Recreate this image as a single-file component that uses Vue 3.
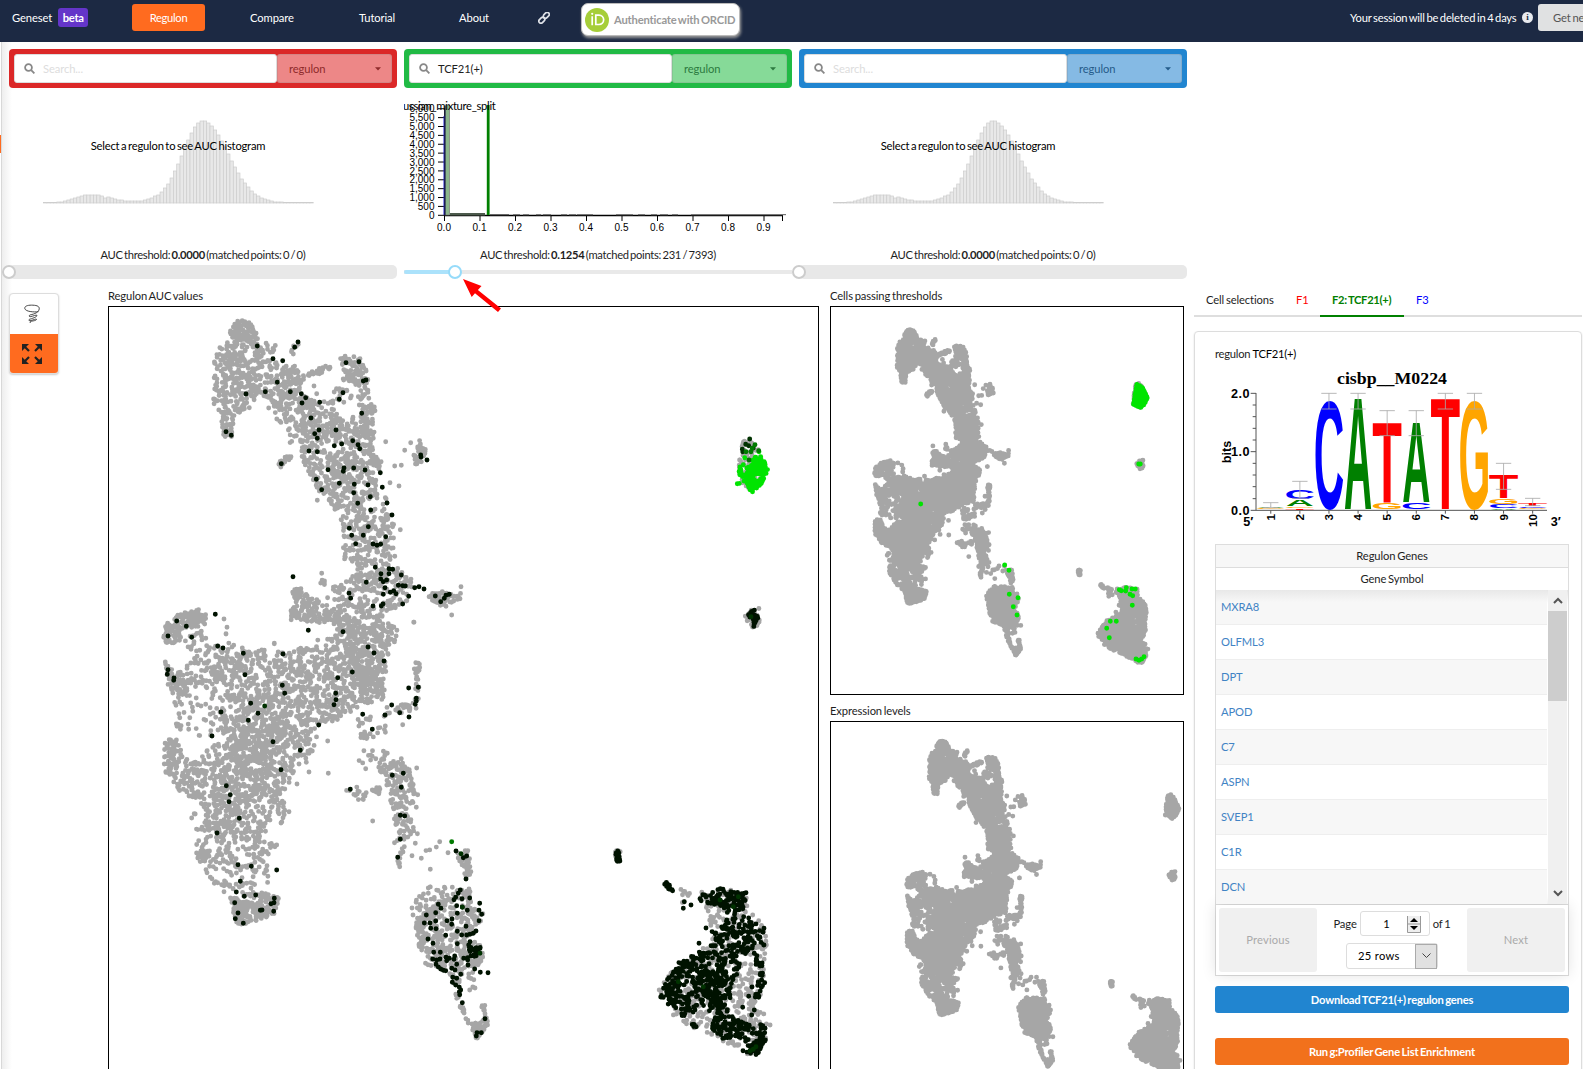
<script setup>
const navItems = ['Compare', 'Tutorial', 'About']

const channels = [
  { color: '#db2828', field: '#ed8787', ink: '#8f2b2b', query: '', value: '0.0000', matched: '0 / 0' },
  { color: '#21ba45', field: '#86da98', ink: '#2c7a40', query: 'TCF21(+)', value: '0.1254', matched: '231 / 7393' },
  { color: '#2185d0', field: '#85bae4', ink: '#255c8a', query: '', value: '0.0000', matched: '0 / 0' },
]

const genes = ['MXRA8', 'OLFML3', 'DPT', 'APOD', 'C7', 'ASPN', 'SVEP1', 'C1R', 'DCN']

/* placeholder histogram */
const bars = Array.from({ length: 81 }, (_, i) => {
  const x = i * 3.33
  const main = 82 * Math.exp(-(((x - 158) / (x < 158 ? 29 : 35)) ** 2))
  const small = 8.5 * Math.exp(-(((x - 46) / 21) ** 2))
  const h = Math.max(0.6, Math.round(main + small + (x > 60 && x < 110 ? 1.5 : 0)))
  return { x, h }
})

const yTicks = Array.from({ length: 13 }, (_, i) => ({
  y: 129.3 - i * 8.88,
  label: (i * 500).toLocaleString('en-US'),
}))
const xTicks = Array.from({ length: 10 }, (_, i) => ({ x: 40 + i * 35.5, label: (i / 10).toFixed(1) }))
const lowBars = [[109, 7], [119, 6], [132, 5], [139, 8], [157, 6], [165, 7], [173, 16], [212, 17], [234, 7], [247, 6], [256, 8], [268, 6], [287, 95]]

/* embedding: outlines are listed per tile in thirds of a pixel */
const TILES = { A: [0, 280], B: [100, 570], C: [350, 680], D: [690, 400] }
let seed = 20731
function rnd() {
  seed = (seed + 0x6d2b79f5) | 0
  let t = Math.imul(seed ^ (seed >>> 15), 1 | seed)
  t = (t + Math.imul(t ^ (t >>> 7), 61 | t)) ^ t
  return ((t ^ (t >>> 14)) >>> 0) / 4294967296
}
function pairs(tile, text) {
  const [ox, oy] = TILES[tile]
  return text.trim().split(/\s+/).map((p) => {
    const [x, y] = p.split(',').map(Number)
    return [ox + x / 3, oy + y / 3]
  })
}
function inside(poly, x, y) {
  let hit = false
  for (let i = 0, j = poly.length - 1; i < poly.length; j = i++) {
    const [xi, yi] = poly[i]
    const [xj, yj] = poly[j]
    if (yi > y !== yj > y && x < ((xj - xi) * (y - yi)) / (yj - yi) + xi) hit = !hit
  }
  return hit
}
function scatter(tile, density, text) {
  const poly = pairs(tile, text)
  const xs = poly.map((p) => p[0])
  const ys = poly.map((p) => p[1])
  const x0 = Math.min(...xs), x1 = Math.max(...xs), y0 = Math.min(...ys), y1 = Math.max(...ys)
  const tries = Math.round((x1 - x0) * (y1 - y0) * density)
  const out = []
  for (let i = 0; i < tries; i++) {
    const x = x0 + rnd() * (x1 - x0)
    const y = y0 + rnd() * (y1 - y0)
    if (inside(poly, x, y)) out.push([x, y])
  }
  return out
}

const grey = [
  ['A', 0.17, '688,155 712,118 752,126 772,165 755,178 700,178'],
  ['A', 0.09, '642,215 690,182 770,168 800,240 880,250 910,300 900,350 860,350 770,350 745,395 700,400 665,400 638,370 642,320 642,290'],
  ['A', 0.14, '670,400 703,400 695,470 672,472 664,430'],
  ['A', 0.06, '798,180 828,185 825,225 795,220'],
  ['A', 0.12, '872,190 900,190 900,208 868,225'],
  ['A', 0.085, '790,345 900,345 960,360 1000,360 1010,400 1040,420 1130,380 1125,450 1120,520 1145,540 1130,620 1120,640 1060,640 1010,650 960,640 932,590 904,540 905,490 862,490 862,440 830,420 820,370'],
  ['A', 0.14, '910,282 988,254 995,270 910,302'],
  ['A', 0.13, '1018,240 1035,222 1083,235 1107,290 1099,320 1070,320 1030,300'],
  ['A', 0.09, '1085,320 1102,320 1108,360 1130,385 1080,390 1070,360'],
  ['A', 0.035, '985,325 1060,325 1050,380 990,370'],
  ['A', 0.2, '830,549 870,520 885,520 850,558 830,567'],
  ['A', 0.2, '1240,530 1260,478 1285,520 1265,545 1245,559'],
  ['A', 0.06, '980,650 1120,630 1172,660 1190,720 1180,790 1200,850 1190,880 1100,880 1030,850 1028,760 1012,710'],
  ['A', 0.13, '860,930 905,925 920,945 1040,1000 1050,1020 1050,1060 990,1030 870,1022 870,990 890,970'],
  ['A', 0.06, '947,900 975,880 980,920 950,915'],
  ['A', 0.065, '985,930 1060,880 1200,870 1237,900 1237,960 1190,990 1100,1000 1040,1000 980,960'],
  ['A', 0.15, '1285,932 1388,937 1390,950 1355,980 1320,978 1285,952'],
  ['B', 0.2, '193,165 240,130 300,118 320,130 315,165 290,170 260,175 230,200 225,220 189,222'],
  ['B', 0.05, '230,200 300,180 328,180 330,230 400,215 450,245 460,290 400,300 370,270 300,250 240,230'],
  ['B', 0.1, '195,275 207,278 250,330 270,360 240,380 204,350'],
  ['B', 0.06, '230,300 300,250 380,260 380,330 300,340 250,340'],
  ['B', 0.07, '380,260 490,238 560,250 640,213 700,198 720,160 800,120 872,160 905,170 872,240 862,310 850,390 800,400 720,447 660,470 640,540 590,595 570,640 535,680 500,780 480,820 340,800 300,700 300,560 360,500 370,350'],
  ['B', 0.06, '735,140 850,130 850,380 750,350'],
  ['B', 0.05, '410,470 560,430 560,640 400,740 340,700'],
  ['B', 0.1, '182,530 225,495 250,560 300,580 300,695 240,665 198,610'],
  ['B', 0.027, '213,340 360,320 370,480 330,500 222,490'],
  ['B', 0.1, '530,690 552,690 557,735 535,775'],
  ['B', 0.045, '273,725 340,740 400,800 460,800 530,825 505,870 517,940 400,960 345,940 305,890 285,840'],
  ['B', 0.16, '285,842 333,842 325,867 290,865'],
  ['B', 0.04, '375,960 420,935 520,970 530,985 410,1000'],
  ['B', 0.2, '390,980 420,990 470,1000 500,967 537,983 525,1030 450,1062 405,1064 396,1010'],
  ['B', 0.08, '860,410 930,400 945,370 943,278 959,278 962,380 940,445 850,440'],
  ['B', 0.035, '762,440 860,440 865,510 780,515'],
  ['B', 0.035, '780,540 870,540 860,600 770,600'],
  ['B', 0.09, '840,590 890,570 918,562 938,630 950,720 930,730 957,790 920,805 890,820 880,720 860,650 840,640'],
  ['B', 0.055, '733,665 760,650 840,640 840,680 780,692'],
  ['B', 0.055, '882,800 920,800 900,890 885,860'],
  ['B', 0.08, '965,838 1012,825 1015,835 975,845'],
  ['B', 0.14, '1070,840 1105,840 1115,910 1088,930 1097,900 1075,870'],
  ['B', 0.085, '980,1010 1050,980 1085,950 1110,960 1115,1000 1149,1030 1140,1080 1102,1100 1149,1130 1149,1170 1122,1200 1060,1220 1000,1192 974,1182 956,1135 945,1075'],
  ['B', 0.035, '932,1010 985,948 1060,950 955,1110'],
  ['B', 0.13, '1055,1220 1080,1220 1078,1290 1110,1355 1102,1362 1070,1290'],
  ['B', 0.25, '1110,1362 1143,1354 1143,1305 1159,1305 1164,1372 1130,1408'],
  ['B', 0.04, '1080,1210 1125,1200 1125,1260 1085,1240'],
  ['C', 0.05, '1043,636 1110,626 1193,636 1193,690 1248,738 1250,800 1243,850 1248,920 1228,980 1263,1030 1248,1092 1202,1128 1155,1102 1040,1048 975,1012 920,932 950,885 1050,816 1080,780 1075,700'],
  ['C', 0.07, '986,624 1015,638 1040,656 1000,668 990,688 1000,650'],
  ['D', 0.1, '163,110 195,133 217,170 212,250 187,272 147,250 147,180'],
  ['D', 0.16, '160,648 188,627 206,624 216,645 211,672 190,686'],
  ['C', 0.35, '792,512 811,511 811,530 793,530'],
].flatMap(([t, d, p]) => scatter(t, d, p))

grey.push(...pairs('A', '1157,485 1232,488 1214,511 1184,558 1204,556 1197,618 1170,608 1201,749 952,661 942,318 950,341 748,383 806,384 880,222 965,880 672,1017 681,1042 678,1062 823,1091 1242,1027 1355,1005 1383,920 1255,1150 1243,1167 1250,1190'),
  ...pairs('B', '683,513 685,610 818,753 591,642 627,606 619,577 950,594 953,674 567,725 530,825 523,220 378,191 321,908 331,922 343,940 372,965 964,865 991,898 1019,815 1044,848 899,890 941,157 908,464 950,321 1109,1260 1125,1254 936,857 946,820 985,954 1107,957 1057,952 936,1014 952,1014 939,1035 952,1062 977,1012 985,970 1003,988'))

const black = [
  ...pairs('A', '772,198 894,186 884,202 819,236 848,242 832,307 1038,248 1077,245 1098,300 1090,303 796,335 871,335 904,341 917,353 906,369 959,367 1029,338 1018,358 738,342 1085,400 678,455 694,466 933,414 957,450 944,461 952,475 1008,450 1058,482 1074,494 1079,506 1025,492 1003,497 927,513 952,515 844,551 984,569 1032,564 1030,574 1061,564 1095,570 1141,578 1262,525 1263,531 1281,540 949,598 965,629 1018,610 1063,613 1104,615 1147,622 1061,638 1111,650 1073,670 1161,669 1112,690 1176,705 1048,745 1105,740 1055,766 1090,766 1157,770 1067,791 1119,792 1131,796 1142,793 879,890 1126,862 1167,866 1178,868 1143,881 1167,881 1204,885'),
  ...pairs('A', '1142,897 1160,900 1150,905 1099,907 1155,923 1195,916 1208,917 1216,918 1244,923 1257,920 1272,927 1047,940 1052,955 1150,943 1171,937 1181,932 1188,941 1226,949 1306,948 1333,955 1338,946 1348,943 1322,965 1119,978 1144,978 1149,972 1208,972 925,1051 1029,1055 646,1003 530,1023 559,1039 504,1068 575,1072'),
  ...pairs('B', '353,228 369,234 430,250 549,252 804,231 822,249 852,273 757,306 713,323 707,370 708,389 702,404 204,299 202,313 222,324 221,331 435,314 547,346 554,370 452,400 474,430 445,451 363,426 336,498 519,515 601,541 543,599 656,465 379,647 391,674 387,695 418,745 351,789 926,354 955,352 949,385 949,393 946,403 875,405 855,435 899,428 927,441 788,433 817,478 910,610 877,616 904,652 751,658 901,736 914,738 901,808 893,862 1068,843 1090,863 1100,858 1098,927 414,884 454,889 530,900 421,934 409,966 433,979 467,975 523,985 404,998 522,998 513,1001 521,1024 481,1021 486,1020 414,1029 406,1046 430,1060'),
  ...pairs('B', '1081,960 1075,970 1067,982 1062,989 1086,986 1109,984 1139,1000 1015,1003 1023,1015 1070,1007 1087,1011 1102,1021 1137,1021 1145,1033 1072,1030 1007,1028 979,1035 973,1059 990,1059 1007,1053 1041,1052 1056,1047 1055,1063 1137,1052 1098,1069 1008,1076 992,1075 1072,1084 1128,1083 1120,1090 1085,1095 1100,1095 1110,1093 1037,1096 984,1107 999,1120 1072,1121 1110,1115 1106,1125 1001,1147 1021,1147 998,1167 1010,1170 1020,1167 1038,1162 1048,1165 1040,1172 1064,1158 1062,1168 1070,1183 1055,1195 1065,1200 1008,1183 1015,1191 1022,1197 1030,1201 1037,1202 1124,1197 1141,1207 1164,1208 1104,1185 1091,1165 1103,1163 1113,1158 1122,1155 1058,1222 1070,1225 1082,1213 1057,1237 1067,1245 1078,1252 1082,1260 1078,1266 1079,1274 1087,1298 1155,1346 1131,1388 1144,1388 1129,1398'),
  ...scatter('B', 0.16, '1108,1130 1145,1130 1147,1145 1125,1160 1100,1175 1100,1160'),
  ...pairs('C', '1068,744 1047,790 1023,675 1003,665 1000,685 1115,741 1196,949 1223,943 1206,921 1213,990 1178,982 1230,772 1241,795 1242,745 1244,908 1205,1005 1179,1112'),
  ...scatter('C', 0.4, '940,609 952,605 971,634 963,636'),
  ...scatter('C', 0.12, '1040,646 1110,626 1192,638 1190,680 1160,700 1100,675 1048,668'),
  ...scatter('C', 0.07, '1130,690 1185,700 1217,740 1212,800 1168,860 1150,940 1130,1000 1050,1000 970,990 932,955 955,890 990,850 1050,815 1082,780 1080,750 1120,730'),
  ...scatter('C', 0.1, '950,890 985,848 1030,822 1030,870 1000,890 970,925 960,970 927,950'),
  ...scatter('C', 0.08, '1050,870 1130,860 1140,950 1110,1010 1080,980 1040,900'),
  ...scatter('C', 0.035, '1190,700 1243,740 1245,800 1215,800'),
  ...scatter('C', 0.07, '1205,800 1240,850 1245,890 1225,970 1212,965 1225,890'),
  ...scatter('C', 0.1, '1100,1000 1160,1000 1200,1035 1180,1072 1120,1080 1083,1047'),
  ...scatter('C', 0.07, '1180,1030 1256,1035 1246,1090 1215,1124 1190,1119'),
  ...scatter('C', 0.3, '1205,1090 1243,1080 1240,1100 1220,1125 1193,1122'),
  ...scatter('C', 0.14, '990,1000 1010,1000 1045,1042 1028,1044'),
  ...scatter('C', 0.6, '797,512 806,512 810,544 799,544'),
  ...scatter('D', 0.35, '166,646 193,629 206,655 203,668 190,684 188,655'),
]
const dark = [
  ...pairs('D', '179,117 167,133 157,148 158,155 176,137 190,144'),
  ...pairs('C', '985,905 1150,680 1165,650 1110,660 1060,920 1210,1108 1218,1100 1200,1112'),
  ...pairs('B', '494,408 1083,851 1087,1012 1140,1150'),
  ...pairs('D', '183,650'),
]
const mid = [...pairs('D', '195,134 206,152 187,145 168,155 183,155 177,180'), ...pairs('B', '1055,815')]
const bright = [
  ...pairs('D', '142,251 150,201 149,213 160,194 164,173 207,155 212,170'),
  ...scatter('D', 0.26, '188,170 219,175 233,210 216,250 187,277 166,258 180,205'),
  ...scatter('D', 0.13, '146,205 180,195 180,240 143,252'),
]

const toPath = (pts) => pts.map(([x, y]) => `M${x.toFixed(1)} ${y.toFixed(1)}h0`).join('')
const greyPath = toPath(grey)
const blackPath = toPath(black)
const darkPath = toPath(dark)
const midPath = toPath(mid)
const brightPath = toPath(bright)

/* the small viewers show the same cells at a reduced scale */
const KX = 0.4508
const KY = 0.4534
const shrink = (pts) => pts.map(([x, y]) => [x * KX + 0.6, y * KY])
const allSmall = toPath(shrink([...grey, ...black, ...dark, ...mid, ...bright]))
const passing = [[302, 672], [554, 855], [567, 871], [568, 943], [594, 953], [580, 980], [591, 1005], [898, 929], [904, 932], [919, 923], [917, 933], [936, 927], [946, 927], [930, 943], [938, 947], [937, 976], [871, 1024], [889, 1024], [860, 1045], [868, 1073], [948, 1137], [957, 1141], [965, 1137], [972, 1130], [956, 552], [961, 552]]
  .map(([x, y]) => [820 + x / 3 - 800.2, 280 + y / 3 - 184.4])
const cluster = [...scatter('D', 0.5, '165,123 185,130 203,145 237,210 215,258 190,278 142,255 155,180')]
const passPath = toPath([...passing, ...shrink(cluster)])

/* sequence logo: [letter, column, bottom, height] */
const INK = { A: 7.1, C: 6.55, G: 6.75, T: 5.7 }
const HUE = { A: '#008000', C: '#0000ff', G: '#ffa500', T: '#ff0000' }
const letters = [
  ['C', 2, 658, 26], ['A', 2, 679, 17], ['G', 2, 684, 5], ['T', 2, 689, 5],
  ['C', 3, 686, 327], ['A', 4, 688, 329], ['T', 5, 665, 236], ['G', 5, 688, 21],
  ['A', 6, 665, 236], ['C', 6, 688, 21], ['T', 7, 688, 330], ['G', 8, 686, 327],
  ['T', 9, 655, 67], ['G', 9, 671, 14], ['C', 9, 683, 11], ['A', 9, 689, 5],
  ['T', 10, 679, 6], ['C', 10, 684, 4], ['G', 10, 688, 3], ['A', 1, 685, 2], ['G', 1, 688, 3],
].map(([ch, col, base, h]) => ({
  ch,
  fill: HUE[ch],
  t: `translate(${176 + col * 87.3} ${base}) scale(${83 / INK[ch]} ${h / (ch === 'C' || ch === 'G' ? 7.1 : 6.88)})`,
}))
const errors = [[1, 668, 683], [2, 604, 655], [3, 340, 387], [4, 340, 387], [5, 392, 467], [6, 392, 467], [7, 340, 387], [8, 340, 387], [9, 550, 628], [10, 655, 677]]
</script>

<template>
  <div class="page">
    <nav class="nav">
      <div class="geneset">Geneset <span class="beta">beta</span></div>
      <div class="active-item">Regulon</div>
      <div v-for="(n, i) in navItems" :key="n" class="nav-item" :class="'n' + i">{{ n }}</div>
      <svg class="link" width="12" height="12" viewBox="0 0 12 12" fill="none" stroke="#dfe2e8" stroke-width="1.7">
        <rect x="5" y="1.2" width="6.6" height="4.2" rx="2.1" transform="rotate(-45 8.3 3.3)" />
        <rect x=".5" y="6.2" width="6.6" height="4.2" rx="2.1" transform="rotate(-45 3.8 8.3)" />
      </svg>
      <div class="orcid">
        <svg width="24" height="24" viewBox="0 0 24 24">
          <circle cx="12" cy="12" r="12" fill="#a6ce39" />
          <g fill="none" stroke="#fff" stroke-width="1.7"><path d="M7.2 8.3v9M10.8 7.2h3.2a4.6 4.6 0 0 1 0 9.3h-3.2z" /></g>
          <circle cx="7.2" cy="5.8" r="1.1" fill="#fff" />
        </svg>
        <span>Authenticate with ORCID</span>
      </div>
      <div class="session">Your session will be deleted in 4 days</div>
      <div class="info">i</div>
      <div class="get">Get new session</div>
    </nav>

    <div class="body">
      <div class="edge"><i></i></div>

      <section class="channels">
        <div v-for="(c, i) in channels" :key="i" class="channel">
          <div class="search" :style="{ background: c.color }">
            <div class="input">
              <svg width="11" height="11" viewBox="0 0 11 11" fill="none" stroke="#888" stroke-width="1.8"><circle cx="4.5" cy="4.5" r="3.4" /><path d="M7.2 7.2l3.2 3.2" /></svg>
              <span :class="{ ph: !c.query }">{{ c.query || 'Search...' }}</span>
            </div>
            <div class="drop" :style="{ background: c.field, color: c.ink }">
              <span>regulon</span>
              <svg width="6" height="4" viewBox="0 0 6 4"><path d="M0 .3h6L3 3.600z" fill="currentColor" /></svg>
            </div>
          </div>

          <svg v-if="i === 1" class="plot" width="388" height="152" viewBox="0 0 388 152">
            <g stroke="#000">
              <path d="M40.500 22V129.500" />
              <path v-for="t in yTicks" :key="t.label" :d="`M34 ${t.y}h6`" />
              <path d="M40 129.500h339" stroke-width="1.5" />
              <path v-for="t in xTicks" :key="t.label" :d="`M${t.x + 0.5} 129v6`" />
              <path d="M378.500 129v6" />
            </g>
            <rect x="41" y="19" width="4.500" height="110" fill="#8bb58b" stroke="#777" stroke-width=".7" />
            <path d="M40 30v99" stroke="#2020d0" />
            <path d="M41 20v109" stroke="#101040" />
            <rect x="46" y="127" width="35" height="2.500" fill="#4c5a4c" />
            <path d="M84.200 19v110" stroke="#008000" stroke-width="2.8" />
            <rect x="86" y="128" width="19" height="1.2" fill="#666" />
            <rect v-for="b in lowBars" :key="b[0]" :x="b[0]" y="128" :width="b[1]" height="1.2" fill="#777" />
            <g class="axis">
              <text v-for="t in yTicks" :key="t.label" x="30.500" :y="t.y + 3.7" text-anchor="end">{{ t.label }}</text>
              <text v-for="t in xTicks" :key="t.label" :x="t.x" y="145" text-anchor="middle">{{ t.label }}</text>
            </g>
            <text class="split s2" x="91.500" y="24" text-anchor="end">gaussian_mixture_split</text>
          </svg>
          <svg v-else class="plot" width="388" height="152" viewBox="0 0 388 152">
            <rect v-for="b in bars" :key="b.x" :x="34.500 + b.x" :y="117 - b.h" width="3.33" :height="b.h" fill="#e8e8e8" stroke="#cdcdcd" stroke-width=".7" />
            <text class="split" x="169" y="64" text-anchor="middle">Select a regulon to see AUC histogram</text>
          </svg>

          <div class="threshold">AUC threshold: <b>{{ c.value }}</b> (matched points: {{ c.matched }})</div>
          <div class="slider" :class="{ on: i === 1 }"><span class="fill"></span><span class="knob"></span></div>
        </div>
        <svg class="arrow" width="40" height="34" viewBox="0 0 40 34"><path d="M0 0l18.500 7-3.600 3.900L38 29.500l-3 3.600L12 14.300l-3.300 3.600z" fill="#f00" /></svg>
      </section>

      <section class="work">
        <div class="tools">
          <div class="tool">
            <svg width="20" height="22" viewBox="0 0 20 22" fill="none" stroke="#333" stroke-width="1">
              <path d="M17 8.500C12 9 3 8.500 2 5 1.500 1.500 7 1 11 1.200c5 .2 7.500 1.600 7 4.300-.4 3.500-5 5.500-10 6.500-1.500.5-1.500 2 0 2 3-.4 7-2.500 7.500-1.500.5 2-6 3.500-8.500 4.500-1.500 1 0 1.500 2 1.200 3-.6 5-2 6-1.400.3 1.400-4 2-7 2.400M8 19.500v1.500" />
            </svg>
          </div>
          <div class="tool orange">
            <svg width="20" height="20" viewBox="0 0 20 20" fill="#222" stroke="#222" stroke-width="2.2">
              <g><path d="M0 0h7L0 7z" stroke="none" /><path d="M2 2l5 5" /></g>
              <g transform="matrix(-1 0 0 1 20 0)"><path d="M0 0h7L0 7z" stroke="none" /><path d="M2 2l5 5" /></g>
              <g transform="matrix(1 0 0 -1 0 20)"><path d="M0 0h7L0 7z" stroke="none" /><path d="M2 2l5 5" /></g>
              <g transform="matrix(-1 0 0 -1 20 20)"><path d="M0 0h7L0 7z" stroke="none" /><path d="M2 2l5 5" /></g>
            </svg>
          </div>
        </div>

        <div class="viewer big">
          <h4>Regulon AUC values</h4>
          <svg class="frame" viewBox="109 307 709 800" width="709" height="800">
            <g class="cells">
              <path :d="greyPath" stroke="#a6a6a6" />
              <path :d="blackPath" stroke="#001200" />
              <path :d="darkPath" stroke="#003200" />
              <path :d="brightPath" stroke="#00e400" />
              <path :d="midPath" stroke="#007a00" />
            </g>
          </svg>
        </div>

        <div class="smalls">
          <div class="viewer">
            <h4>Cells passing thresholds</h4>
            <svg class="frame" viewBox="831 307 352 387" width="352" height="387">
              <g class="cells" transform="translate(800.2 184.4)">
                <path :d="allSmall" stroke="#a6a6a6" />
                <path :d="passPath" stroke="#00e400" />
              </g>
            </svg>
          </div>
          <div class="viewer">
            <h4>Expression levels</h4>
            <svg class="frame" viewBox="831 722 352 387" width="352" height="387">
              <g class="cells" transform="translate(832.3 595.7)"><path :d="allSmall" stroke="#a6a6a6" /></g>
            </svg>
          </div>
        </div>

        <aside class="side">
          <div class="tabs">
            <div class="tab">Cell selections</div>
            <div class="tab f1">F1</div>
            <div class="tab f2">F2: TCF21(+)</div>
            <div class="tab f3">F3</div>
          </div>
          <div class="card">
            <div class="title">regulon <span>TCF21(+)</span></div>
            <svg class="logo" width="354" height="171" viewBox="96 252 1062 513">
              <text x="627" y="312" text-anchor="middle" class="serif" textLength="330" lengthAdjust="spacingAndGlyphs">cisbp__M0224</text>
              <g stroke="#555" stroke-width="3">
                <path d="M219 339V691M203 340h16M203 515h16M203 691h889" />
                <path d="M209 375h10M209 410h10M209 445h10M209 480h10M209 550h10M209 585h10M209 620h10M209 656h10" />
                <path v-for="i in 10" :key="i" :d="`M${176 + i * 87.3} 691v10`" />
              </g>
              <g class="bold">
                <text v-for="(l, i) in letters" :key="i" :transform="l.t" :fill="l.fill" font-size="10" text-anchor="middle">{{ l.ch }}</text>
              </g>
              <path v-for="e in errors" :key="e[0]" :d="`M${153 + e[0] * 87.3} ${e[1]}h46M${153 + e[0] * 87.3} ${e[2]}h46M${176 + e[0] * 87.3} ${e[1]}V${e[2]}`" stroke="#aaa" stroke-width="2.5" fill="none" />
              <g class="bold" font-size="38">
                <text x="200" y="354" text-anchor="end" textLength="56">2.0</text>
                <text x="200" y="529" text-anchor="end" textLength="56">1.0</text>
                <text x="200" y="705" text-anchor="end" textLength="56">0.0</text>
                <text transform="translate(143 516) rotate(-90)" text-anchor="middle">bits</text>
                <text x="181" y="738">5′</text>
                <text x="1103" y="738">3′</text>
                <text v-for="i in 10" :key="i" :transform="`translate(${188 + i * 87.3} 702) rotate(-90)`" text-anchor="end" font-size="35">{{ i }}</text>
              </g>
            </svg>
            <div class="table">
              <div class="th grey">Regulon Genes</div>
              <div class="th">Gene Symbol</div>
              <div class="rows">
                <div class="list"><div v-for="g in genes" :key="g" class="row">{{ g }}</div></div>
                <div class="bar">
                  <svg width="10" height="7" viewBox="0 0 10 7" fill="none" stroke="#555" stroke-width="2"><path d="M1 6l4-4 4 4" /></svg>
                  <div class="thumb"></div>
                  <svg width="10" height="7" viewBox="0 0 10 7" fill="none" stroke="#555" stroke-width="2"><path d="M1 1l4 4 4-4" /></svg>
                </div>
              </div>
              <div class="pager">
                <div class="pbtn">Previous</div>
                <div class="mid">
                  <div class="line">Page
                    <div class="num">1<svg width="15" height="18" viewBox="0 0 15 18"><path d="M.5 1v16.500h13V1M.5 9h13" fill="#eee" stroke="#999" /><path d="M7 3l4 4H3zM7 15l4-4H3z" /></svg></div>
                    of 1</div>
                  <div class="sel"><span>25 rows</span><i><svg width="9" height="6" viewBox="0 0 9 6" fill="none" stroke="#444"><path d="M.5 .5l4 4 4-4" /></svg></i></div>
                </div>
                <div class="pbtn">Next</div>
              </div>
            </div>
            <div class="btn blue">Download TCF21(+) regulon genes</div>
            <div class="btn org">Run g:Profiler Gene List Enrichment</div>
          </div>
        </aside>
      </section>
    </div>
  </div>
</template>

<style>
body { margin: 0; overflow: hidden; }
</style>

<style scoped>
.page { width: 1583px; height: 1069px; overflow: hidden; background: #fff; font: 11.2px/16px Lato, sans-serif; letter-spacing: -0.1px; word-spacing: -1px; color: #1e1e1e; display: flex; flex-direction: column; }
.page * { box-sizing: border-box; }
.nav { height: 42px; flex: none; background: #1c2943; color: #fff; display: flex; align-items: flex-start; white-space: nowrap; overflow: hidden; }
.geneset { margin: 10px 0 0 12px; width: 120px; display: flex; flex: none; }
.beta { background: #6435c9; border-radius: 3px; width: 30px; height: 19px; line-height: 19px; margin: -2px 0 0 6px; text-align: center; font-weight: 700; letter-spacing: -.3px; }
.active-item { margin-top: 4px; width: 73px; height: 27px; border-radius: 3px; background: #ff6b1f; line-height: 28px; text-align: center; flex: none; letter-spacing: -.3px; }
.nav-item { margin-top: 10px; text-align: center; flex: none; }
.n0 { width: 80px; margin-left: 27px; }
.n1 { width: 80px; margin-left: 25px; }
.n2 { width: 80px; margin-left: 17px; }
.link { margin: 12px 0 0 24px; flex: none; }
.orcid { margin: 3px 0 0 31px; width: 159px; height: 33px; border-radius: 7px; border: 1px solid #bbb; background: #fff; box-shadow: 1px 2px 3px #999; display: flex; align-items: center; padding-left: 3px; color: #999; font-weight: 700; flex: none; gap: 5px; letter-spacing: -.18px; }
.session { margin: 10px 0 0 610px; width: 168px; flex: none; letter-spacing: -.2px; }
.info { margin: 12px 0 0 4px; width: 11px; height: 11px; border-radius: 50%; background: #e8eaee; color: #1c2943; font: 900 9px/11px "Liberation Serif", serif; text-align: center; flex: none; }
.get { margin: 4px 0 0 5px; width: 100px; height: 27px; border-radius: 3px; background: #e0e1e2; color: #555; line-height: 28px; padding-left: 15px; flex: none; }

.body { position: relative; flex: 1; display: flex; flex-direction: column; }
.edge { position: absolute; left: 0; top: 0; bottom: 0; width: 12px; background: linear-gradient(90deg, #fff 1px, #d8d8d8 1px, #d8d8d8 2px, #eee 2px, #fff 12px); }
.edge i { position: absolute; left: 0; top: 93px; width: 1px; height: 18px; background: #ff6b1f; }
.channels { position: relative; display: flex; gap: 7px; padding: 7px 0 0 9px; height: 246px; flex: none; }
.channel { width: 388px; display: flex; flex-direction: column; }
.search { height: 39px; border-radius: 4px; padding: 5px; display: flex; flex: none; }
.input { width: 263px; height: 29px; background: #fff; border-radius: 3px; border: 1px solid #ddd; display: flex; align-items: center; padding-left: 9px; gap: 8px; }
.ph { color: #ddd; }
.drop { flex: 1; height: 29px; border-radius: 3px; border: 1px solid rgba(120, 120, 120, .2); display: flex; align-items: center; justify-content: space-between; padding: 0 10px 0 11px; }
.plot { display: block; height: 152px; flex: none; overflow: hidden; letter-spacing: 0; margin-top: -2px; }
.axis { font: 10px "Liberation Sans", sans-serif; fill: #000; }
.split { font: 11.2px Lato, sans-serif; fill: #000; letter-spacing: -.2px; word-spacing: -1px; }
.s2 { letter-spacing: -.3px; }
.threshold { margin-top: 9px; height: 17px; text-align: center; letter-spacing: -.3px; word-spacing: -1.2px; }
.slider { position: relative; margin-top: 1px; height: 14px; background: #e8e8e8; border-radius: 5px; }
.slider.on { background: linear-gradient(#fff 5px, #e9e9e9 5px, #e9e9e9 9px, #fff 9px); border-radius: 0; }
.fill { position: absolute; left: 0; top: 5px; height: 4px; width: 0; border-radius: 2px; background: #abe2fb; }
.on .fill { width: 51px; }
.knob { position: absolute; left: -7px; top: 0; width: 14px; height: 14px; border-radius: 50%; border: 2px solid #ccc; background: #fff; }
.on .knob { left: 44px; border-color: #96dbfa; }
.arrow { position: absolute; left: 463px; top: 237px; z-index: 2; }

.work { position: relative; display: flex; align-items: flex-start; }
.tools { margin: 5px 0 0 9px; width: 50px; height: 81px; border: 1px solid #ddd; border-radius: 4px; box-shadow: 0 1px 2px #ccc; overflow: hidden; background: #fff; flex: none; }
.tool { height: 40px; display: flex; align-items: center; justify-content: center; padding-right: 4px; }
.tool:first-child svg { width: 18px; }
.orange { background: #ff6b1f; }
.big { margin-left: 49px; }
h4 { margin: 0; font-weight: 400; font-size: 11.2px; line-height: 16px; height: 18px; }
.frame { display: block; border: 1px solid #000; box-sizing: content-box; overflow: hidden; }
.cells { fill: none; stroke-width: 4.9; stroke-linecap: round; }
.smalls { margin-left: 11px; display: flex; flex-direction: column; gap: 8px; }
.smalls, .big { flex: none; }
.side { margin: 1px 0 0 10px; width: 388px; flex: none; }
.tabs { display: flex; height: 28px; border-bottom: 2px solid #dedede; }
.tab { padding: 3px 12px 0; height: 28px; }
.tab:first-child { width: 90px; white-space: nowrap; }
.f1 { color: #f00; width: 36px; }
.f2 { color: #008000; font-weight: 700; width: 84px; border-bottom: 2px solid #008000; white-space: nowrap; letter-spacing: -.3px; }
.f3 { color: #00f; }
.card { margin-top: 14px; height: 760px; border: 1px solid #ddd; border-radius: 4px; padding: 14px 13px 0 20px; box-shadow: 0 1px 2px #ddd; }
.title { height: 16px; word-spacing: 0; letter-spacing: -.25px; }
.title span { color: #000; }
.logo { display: block; letter-spacing: 0; margin-top: 2px; }
.serif { font: bold 50px "Liberation Serif", serif; }
.bold { font-family: "Liberation Sans", sans-serif; font-weight: 700; }
.table { margin-top: 9px; width: 354px; border: 1px solid #ddd; height: 432px; }
.th { height: 22px; line-height: 22px; text-align: center; background: #fff; }
.grey { height: 23px; background: #f7f7f7; border-bottom: 1px solid #ddd; }
.rows { height: 315px; display: flex; overflow: hidden; background: linear-gradient(#e6e6e6, #fff 14px); border-bottom: 1px solid #ddd; }
.list { width: 331px; }
.row { height: 35px; line-height: 34px; padding-left: 5px; color: #4183c4; border-bottom: 1px solid #eee; }
.row:nth-child(odd) { background: #f7f7f7; }
.row:first-child { background: linear-gradient(#e8e8e8, #f7f7f7 12px); }
.row:nth-child(even) { background: #fff; }
.bar { width: 19px; margin-left: 1px; background: #f0f0f0; display: flex; flex-direction: column; align-items: center; padding: 7px 0; }
.thumb { width: 19px; height: 90px; background: #cdcdcd; margin: 7px 0 auto; }
.pager { display: flex; justify-content: space-between; padding: 3px 3px; height: 70px; background: #fff; box-shadow: 0 0 14px rgba(0, 0, 0, .12); }
.pbtn { width: 98px; height: 64px; line-height: 64px; border-radius: 3px; background: #f0f0f0; color: #aaa; text-align: center; letter-spacing: .15px; }
.mid { flex: 1; display: flex; flex-direction: column; align-items: center; padding-top: 3px; gap: 7px; }
.line { display: flex; align-items: center; gap: 3px; height: 25px; }
.num { width: 70px; height: 25px; border: 1px solid #ddd; border-radius: 3px; display: flex; align-items: center; justify-content: flex-end; gap: 17px; padding-right: 7px; color: #000; }
.sel { width: 92px; height: 26px; border: 1px solid #ddd; border-radius: 3px; display: flex; align-items: center; justify-content: space-between; padding-left: 11px; color: #000; letter-spacing: .3px; word-spacing: 0; }
.sel i { width: 22px; height: 25px; background: #e1e1e1; border: 1px solid #aaa; display: flex; align-items: center; justify-content: center; }
.btn { width: 354px; height: 27px; line-height: 27px; border-radius: 3px; text-align: center; color: #fff; font-weight: 700; letter-spacing: -.2px; }
.blue { background: #2185d0; margin-top: 10px; }
.org { background: #f2711c; margin-top: 25px; }
</style>
